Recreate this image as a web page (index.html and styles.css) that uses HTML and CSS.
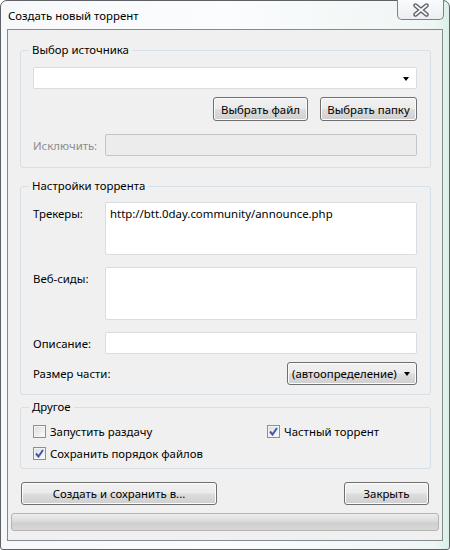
FILE: index.html
```html
<!DOCTYPE html>
<html lang="ru">
<head>
    <meta charset="UTF-8">
    <title>Создать новый торрент</title>
    <link rel="stylesheet" href="styles.css">
</head>
<body>

<div class="window">
    <div class="titlebar">
        <span class="title">Создать новый торрент</span>
        <div class="close-btn">
            <svg width="18" height="14" viewBox="0 0 18 14">
                <path d="M3.5 2.5 L14.5 11.5 M14.5 2.5 L3.5 11.5" stroke="#5c6066" stroke-width="4.4" stroke-linecap="round"/>
                <path d="M3.5 2.5 L14.5 11.5 M14.5 2.5 L3.5 11.5" stroke="#f4f5f7" stroke-width="1.8" stroke-linecap="round"/>
            </svg>
        </div>
    </div>

    <div class="client">
        <!-- Источник -->
        <fieldset class="group group-source">
            <legend>Выбор источника</legend>
            <div class="combo"><span class="arrow"></span></div>
            <div class="btn-row">
                <button class="btn btn-file">Выбрать файл</button>
                <button class="btn btn-folder">Выбрать папку</button>
            </div>
            <div class="field-row">
                <label class="label disabled">Исключить:</label>
                <input class="text" type="text" disabled>
            </div>
        </fieldset>

        <!-- Настройки -->
        <fieldset class="group group-settings">
            <legend>Настройки торрента</legend>
            <div class="field-row top">
                <label class="label">Трекеры:</label>
                <textarea class="text area">http://btt.0day.community/announce.php</textarea>
            </div>
            <div class="field-row top">
                <label class="label">Веб-сиды:</label>
                <textarea class="text area"></textarea>
            </div>
            <div class="field-row">
                <label class="label">Описание:</label>
                <input class="text" type="text">
            </div>
            <div class="field-row piece">
                <label class="label">Размер части:</label>
                <div class="dropdown">(автоопределение)<span class="arrow"></span></div>
            </div>
        </fieldset>

        <!-- Другое -->
        <fieldset class="group group-other">
            <legend>Другое</legend>
            <div class="checks">
                <label class="check"><span class="box"></span>Запустить раздачу</label>
                <label class="check"><span class="box checked"><svg width="9" height="9" viewBox="0 0 9 9"><path d="M1 4.5 L3.5 7.5 L8 1" fill="none" stroke="#3d5aa8" stroke-width="2"/></svg></span>Частный торрент</label>
                <label class="check"><span class="box checked"><svg width="9" height="9" viewBox="0 0 9 9"><path d="M1 4.5 L3.5 7.5 L8 1" fill="none" stroke="#3d5aa8" stroke-width="2"/></svg></span>Сохранить порядок файлов</label>
            </div>
        </fieldset>

        <div class="actions">
            <button class="btn btn-create">Создать и сохранить в...</button>
            <button class="btn btn-close">Закрыть</button>
        </div>

        <div class="progress"></div>
    </div>
</div>

</body>
</html>
```

FILE: styles.css
```css
* { box-sizing: border-box; }
body { margin: 0; font-family: "Noto Sans", "Open Sans", sans-serif; font-size: 11.4px; color: #000; }

.window { width: 450px; height: 550px; border: 1px solid #5e6165; border-radius: 7px 7px 3px 3px; padding: 0 6px 8px 6px; display: flex; flex-direction: column; background: linear-gradient(90deg, #f6f8fa 0%, #fbfcfd 50%, #eef6f4 97%, #d6f0e4 100%); }
.titlebar { height: 28px; display: flex; justify-content: space-between; align-items: flex-start; }
.title { line-height: 29px; padding-left: 1px; }
.close-btn { width: 47px; height: 20px; margin-top: -1px; margin-right: -1px; border: 1px solid #7d8288; border-top: none; border-radius: 0 0 5px 5px; background: linear-gradient(#fafbfc, #eceef1); display: flex; align-items: center; justify-content: center; }

.client { flex: 1; border: 1px solid #858a91; background: #f0f0f0; padding: 12px 11px 9px 12px; display: flex; flex-direction: column; }

.group { margin: 0; border: 1px solid #d5dfe5; border-radius: 3px; padding: 0 13px 0 12px; }
.group legend { padding: 0 3px; margin-left: -4px; line-height: 16px; }
.group-source { padding-top: 9px; padding-bottom: 11px; }
.group-settings { margin-top: 10px; padding-top: 8px; padding-bottom: 9px; }
.group-other { margin-top: 4px; padding-top: 8px; padding-bottom: 7px; }

.combo { height: 22px; background: #fff; border: 1px solid #dcdcdc; border-radius: 2px; position: relative; }
.arrow { position: absolute; right: 7px; top: 9px; border-left: 3.5px solid transparent; border-right: 3.5px solid transparent; border-top: 4px solid #000; }

.btn-row { display: flex; justify-content: flex-end; gap: 12px; margin-top: 8px; }
.btn { font: inherit; color: #000; height: 24px; padding: 0 4px; white-space: nowrap; border: 1px solid #707070; border-radius: 3px; background: linear-gradient(#f2f2f2 0%, #ebebeb 48%, #dddddd 52%, #cfcfcf 100%); box-shadow: inset 0 0 0 1px #fcfcfc; }
.btn-file { width: 95px; }
.btn-folder { width: 97px; }

.field-row { display: flex; align-items: center; margin-top: 12px; }
.group-source .field-row { margin-top: 13px; }
.field-row.top { align-items: flex-start; }
.group-settings .field-row:first-of-type { margin-top: 0; }
.label { width: 72px; flex-shrink: 0; white-space: nowrap; }
.field-row.top .label { padding-top: 4px; }
.label.disabled { color: #8d8d8d; }

.text { flex: 1; height: 22px; font: inherit; background: #fff; border: 1px solid #dadce0; border-radius: 2px; padding: 2px 4px; outline: none; }
.text:disabled { background: #ececec; border-color: #c2c4c7; }
.area { height: 53px; resize: none; padding: 3px 4px; line-height: 16px; overflow: hidden; }

.field-row.piece { margin-top: 8px; justify-content: space-between; }
.dropdown { position: relative; width: 130px; height: 23px; line-height: 21px; padding-left: 4px; white-space: nowrap; border: 1px solid #707070; border-radius: 3px; background: linear-gradient(#f2f2f2 0%, #ebebeb 48%, #dddddd 52%, #cfcfcf 100%); box-shadow: inset 0 0 0 1px #fcfcfc; }
.dropdown .arrow { top: 9px; right: 6px; }

.checks { display: grid; grid-template-columns: 234px 1fr; row-gap: 6px; }
.check { display: flex; align-items: center; height: 16px; }
.box { width: 13px; height: 13px; margin-right: 4px; border: 1px solid #8e8f8f; background: linear-gradient(135deg, #dcdcdc, #fbfbfb); box-shadow: inset 0 0 0 1px #f4f4f4; display: flex; align-items: center; justify-content: center; }

.actions { display: flex; justify-content: space-between; margin: 13px 2px 0 1px; }
.actions .btn { height: 23px; }
.btn-create { width: 196px; }
.btn-close { width: 85px; }

.progress { height: 18px; margin: 8px -8px 0 -9px; border: 1px solid #b4b4b4; border-radius: 3px; background: linear-gradient(#eeeeee 0%, #dadada 45%, #cfcfcf 60%, #d8d8d8 100%); }
```
